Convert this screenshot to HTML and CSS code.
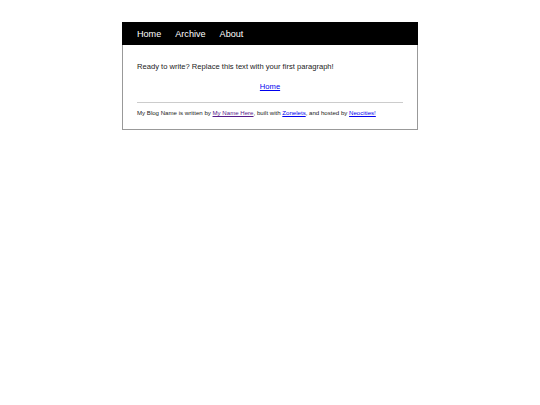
FILE: index.html
```html
<!DOCTYPE html>
<html lang="en">
<head>
<meta charset="utf-8">
<title>My Blog Name</title>
<link rel="stylesheet" href="styles.css">
</head>
<body>
<div class="container">
  <nav class="nav">
    <a href="#">Home</a>
    <a href="#">Archive</a>
    <a href="#">About</a>
  </nav>
  <main class="content">
    <p class="intro">Ready to write? Replace this text with your first paragraph!</p>
    <p class="home-link"><a href="#">Home</a></p>
    <hr class="rule">
    <footer class="footer">My Blog Name is written by <a class="visited" href="#">My Name Here</a>, built with <a href="#">Zonelets</a>, and hosted by <a href="#">Neocities!</a></footer>
  </main>
</div>
</body>
</html>
```

FILE: styles.css
```css
html, body {
  margin: 0;
  padding: 0;
  background: #fff;
}
body {
  font-family: "Liberation Sans", Arial, sans-serif;
  color: #222;
  font-size: 7.6px;
}
.container {
  width: 296px;
  box-sizing: border-box;
  margin: 22px auto 0;
  border: 1px solid #999;
  border-top: 0;
}
.nav {
  background: #000;
  height: 23px;
  display: flex;
  align-items: center;
  gap: 14px;
  margin: 0 -1px;
  padding: 0 14px 0 15px;
}
.nav a {
  color: #fff;
  text-decoration: none;
  font-size: 9.1px;
}
.content {
  padding: 9px 14px 13px;
}
.intro {
  margin: 7.5px 0 0;
}
.home-link {
  text-align: center;
  margin: 11.5px 0 0;
}
a {
  color: #0000ee;
}
a.visited {
  color: #551a8b;
}
.rule {
  border: 0;
  border-top: 1px solid #ccc;
  margin: 11px 0 0;
  height: 0;
}
.footer {
  font-size: 6.1px;
  margin-top: 6px;
}
```
